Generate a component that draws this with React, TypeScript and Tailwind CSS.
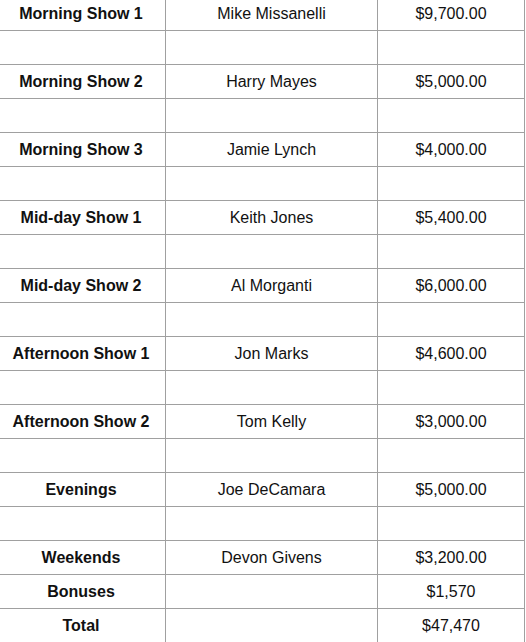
import React from "react";

type Row = { show: string; host: string; amount: string };

const rows: Row[] = [
  { show: "Morning Show 1", host: "Mike Missanelli", amount: "$9,700.00" },
  { show: "", host: "", amount: "" },
  { show: "Morning Show 2", host: "Harry Mayes", amount: "$5,000.00" },
  { show: "", host: "", amount: "" },
  { show: "Morning Show 3", host: "Jamie Lynch", amount: "$4,000.00" },
  { show: "", host: "", amount: "" },
  { show: "Mid-day Show 1", host: "Keith Jones", amount: "$5,400.00" },
  { show: "", host: "", amount: "" },
  { show: "Mid-day Show 2", host: "Al Morganti", amount: "$6,000.00" },
  { show: "", host: "", amount: "" },
  { show: "Afternoon Show 1", host: "Jon Marks", amount: "$4,600.00" },
  { show: "", host: "", amount: "" },
  { show: "Afternoon Show 2", host: "Tom Kelly", amount: "$3,000.00" },
  { show: "", host: "", amount: "" },
  { show: "Evenings", host: "Joe DeCamara", amount: "$5,000.00" },
  { show: "", host: "", amount: "" },
  { show: "Weekends", host: "Devon Givens", amount: "$3,200.00" },
  { show: "Bonuses", host: "", amount: "$1,570" },
  { show: "Total", host: "", amount: "$47,470" },
];

export default function App() {
  return (
    <div className="w-[526px] h-[642px] overflow-hidden bg-white">
      <div
        className="ml-[-4px] mt-[-4px] w-[529px] border-t border-l border-[#a0a0a0] text-[16px] text-[#111]"
        style={{ fontFamily: '"Liberation Sans", Arial, sans-serif' }}
      >
        {rows.map((r, i) => (
          <div key={i} className="flex h-[34px] border-b border-[#a0a0a0]">
            <div className="w-[169px] shrink-0 border-r border-[#a0a0a0] flex items-center justify-center font-bold">
              {r.show}
            </div>
            <div className="w-[212px] shrink-0 border-r border-[#a0a0a0] flex items-center justify-center">
              {r.host}
            </div>
            <div className="w-[147px] shrink-0 border-r border-[#a0a0a0] flex items-center justify-center">
              {r.amount}
            </div>
          </div>
        ))}
      </div>
    </div>
  );
}
